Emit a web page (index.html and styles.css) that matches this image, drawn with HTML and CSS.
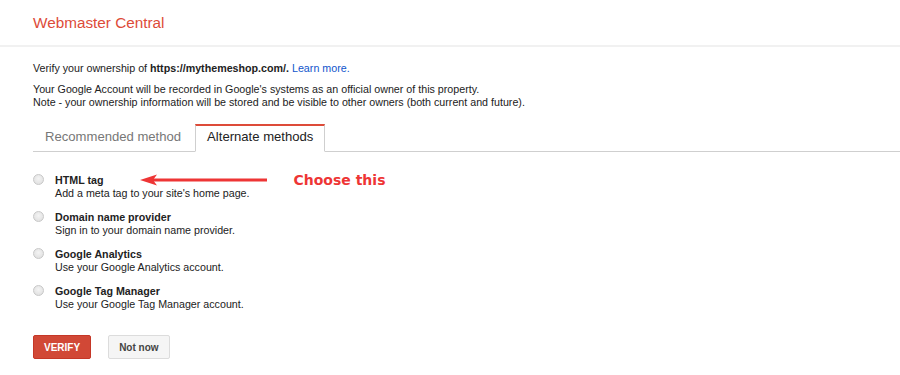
FILE: index.html
```html
<!DOCTYPE html>
<html lang="en">

<head>
    <meta charset="UTF-8">
    <meta name="viewport" content="width=device-width, initial-scale=1.0">
    <title>Webmaster Central</title>
    <link rel="stylesheet" href="styles.css">
</head>

<body>
    <div class="header">
        <span class="brand">Webmaster Central</span>
    </div>
    <div class="content">
        <p class="intro">Verify your ownership of <b>https://mythemeshop.com/.</b> <a href="#">Learn more.</a></p>
        <p class="note">Your Google Account will be recorded in Google's systems as an official owner of this property.<br>
            Note - your ownership information will be stored and be visible to other owners (both current and future).</p>

        <div class="tabs">
            <div class="tab">Recommended method</div>
            <div class="tab active">Alternate methods</div>
        </div>

        <div class="methods">
            <div class="method">
                <span class="radio"></span>
                <div class="method-text">
                    <div class="method-title">
                        HTML tag
                        <span class="hint">
                            <svg width="127" height="14" viewBox="0 0 127 14">
                                <line x1="10" y1="7" x2="127" y2="7" stroke="#ee3535" stroke-width="3" />
                                <path d="M0 7 L17 1.5 L13 7 L17 12.5 Z" fill="#ee3535" />
                            </svg>
                            <span class="hint-text">Choose this</span>
                        </span>
                    </div>
                    <div class="method-desc">Add a meta tag to your site's home page.</div>
                </div>
            </div>
            <div class="method">
                <span class="radio"></span>
                <div class="method-text">
                    <div class="method-title">Domain name provider</div>
                    <div class="method-desc">Sign in to your domain name provider.</div>
                </div>
            </div>
            <div class="method">
                <span class="radio"></span>
                <div class="method-text">
                    <div class="method-title">Google Analytics</div>
                    <div class="method-desc">Use your Google Analytics account.</div>
                </div>
            </div>
            <div class="method">
                <span class="radio"></span>
                <div class="method-text">
                    <div class="method-title">Google Tag Manager</div>
                    <div class="method-desc">Use your Google Tag Manager account.</div>
                </div>
            </div>
        </div>

        <div class="actions">
            <button class="btn btn-red">VERIFY</button>
            <button class="btn btn-grey">Not now</button>
        </div>
    </div>
</body>

</html>
```

FILE: styles.css
```css
body {
    margin: 0;
    font-family: Arial, "Liberation Sans", sans-serif;
    font-size: 10.7px;
    color: #222;
    background-color: #fff;
}

.header {
    height: 47px;
    padding-left: 33px;
    border-bottom: 2px solid #f1f1f1;
    box-sizing: border-box;
}

.brand {
    display: inline-block;
    margin-top: 14px;
    font-size: 15.3px;
    color: #dd4b39;
}

.content {
    padding-left: 33px;
}

.intro {
    margin: 14px 0 0;
    line-height: 15px;
}

.intro a {
    color: #1155cc;
    text-decoration: none;
}

.note {
    margin: 7px 0 0;
    line-height: 13px;
}

.tabs {
    display: flex;
    margin-top: 15px;
    border-bottom: 1px solid #cfcfcf;
    height: 27px;
}

.tab {
    font-size: 13.1px;
    color: #777;
    padding: 5px 12px 0;
    margin-bottom: -1px;
}

.tab.active {
    color: #222;
    background-color: #fff;
    border: 1px solid #cfcfcf;
    border-top: 2px solid #dd4b39;
    border-bottom-color: #fff;
    padding: 3px 11px 0;
    margin-left: 2px;
}

.methods {
    margin-top: 21px;
}

.method {
    display: flex;
    align-items: flex-start;
    margin-bottom: 10px;
}

.radio {
    width: 11px;
    height: 11px;
    margin: 1px 11px 0 0;
    border-radius: 50%;
    border: 1px solid #c8c8c8;
    box-sizing: border-box;
    background: radial-gradient(circle at 50% 40%, #f4f4f4, #dcdcdc);
    flex-shrink: 0;
}

.method-title {
    display: flex;
    align-items: center;
    font-weight: bold;
    line-height: 14px;
    height: 14px;
}

.method-desc {
    line-height: 14px;
    margin-top: -1px;
}

.hint {
    display: flex;
    align-items: center;
    margin-left: 36px;
    font-weight: normal;
}

.hint-text {
    margin-left: 27px;
    font-family: "DejaVu Sans", Verdana, sans-serif;
    font-weight: bold;
    font-size: 14px;
    color: #ee3535;
}

.actions {
    display: flex;
    gap: 17px;
    margin-top: 24px;
}

.btn {
    height: 24px;
    font-family: Arial, "Liberation Sans", sans-serif;
    font-size: 10px;
    font-weight: bold;
    border-radius: 2px;
    padding: 0 10px;
}

.btn-red {
    background-color: #d14836;
    border: 1px solid #c53727;
    color: #fff;
}

.btn-grey {
    background-color: #f5f5f5;
    border: 1px solid #dcdcdc;
    color: #444;
}
```
